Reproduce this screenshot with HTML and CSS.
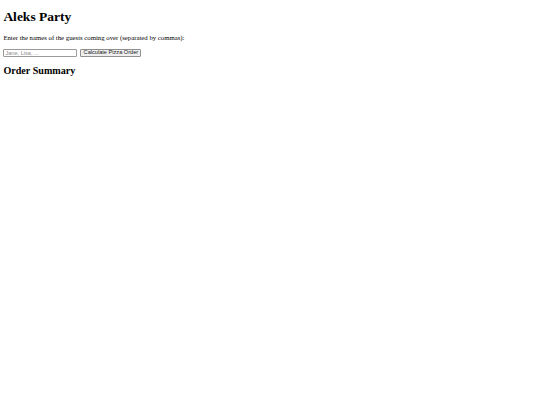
FILE: index.html
```html
<!DOCTYPE html>
<html>
<head>
<meta charset="utf-8">
<title>Aleks Party</title>
<link rel="stylesheet" href="styles.css">
</head>
<body class="page">
<h1 class="title">Aleks Party</h1>
<p class="prompt">Enter the names of the guests coming over (separated by commas):</p>
<div class="form-row">
<input class="guests" type="text" placeholder="Jane, Lisa, ..."><button class="calc" type="button">Calculate Pizza Order</button>
</div>
<h2 class="summary">Order Summary</h2>
</body>
</html>
```
FILE: styles.css
```css
html { background: #fff; }
.page {
  margin: 3.375px;
  font-family: "Liberation Serif", "Times New Roman", serif;
  color: #000;
}
.title {
  font-size: 13.5px;
  font-weight: bold;
  margin: 6px 0 9px;
  line-height: normal;
}
.prompt {
  font-size: 6.75px;
  margin: 5.75px 0 7.75px;
}
.form-row {
  font-size: 6.75px;
  display: flex;
  align-items: center;
  gap: 3px;
}
.guests {
  font-family: "Liberation Sans", Arial, sans-serif;
  font-size: 5.625px;
  width: 74px;
  height: 8px;
  box-sizing: border-box;
  padding: 0 1px;
  border: 1px solid #9a9a9a;
  border-radius: 1px;
  margin: 0;
}
.guests::placeholder { color: #8a8a8a; }
.calc {
  font-family: "Liberation Sans", Arial, sans-serif;
  font-size: 5.625px;
  width: 61px;
  height: 8px;
  box-sizing: border-box;
  padding: 0 2px;
  border: 1px solid #8f8f8f;
  border-radius: 1px;
  background: #efefef;
  color: #222;
  margin: 0;
  line-height: 1;
}
.summary {
  font-size: 10.125px;
  margin: 7.6px 0 8.4px;
}
```
